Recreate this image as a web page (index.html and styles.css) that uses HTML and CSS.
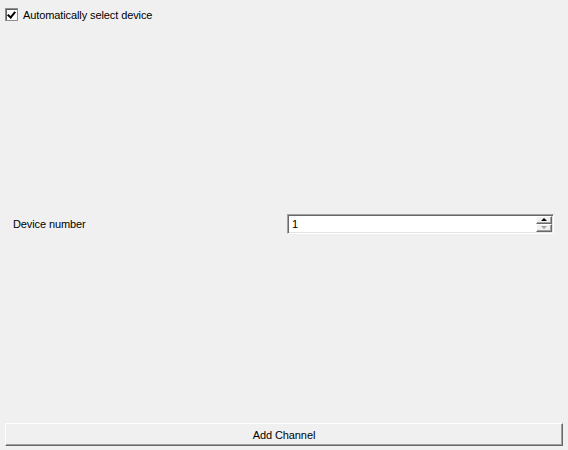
FILE: index.html
```html
<!DOCTYPE html>
<html>
<head>
    <title>Add Channel</title>
    <link rel="stylesheet" href="styles.css">
</head>
<body>
    <div class="window">
        <div class="auto-row">
            <span class="check-box checked"></span>
            <span class="check-label">Automatically select device</span>
        </div>

        <div class="device-area">
            <div class="device-row">
                <span class="device-label">Device number</span>
                <div class="spin-box">
                    <span class="spin-value">1</span>
                    <div class="spin-buttons">
                        <span class="spin-btn up"><i class="arrow-up"></i></span>
                        <span class="spin-btn down"><i class="arrow-down"></i></span>
                    </div>
                </div>
            </div>
        </div>

        <div class="button-row">
            <button class="add-button">Add Channel</button>
        </div>
    </div>
</body>
</html>
```

FILE: styles.css
```css
body {
    margin: 0;
    background-color: #f0f0f0;
    font-family: "Liberation Sans", Arial, sans-serif;
    font-size: 11px;
    letter-spacing: -0.1px;
    color: #000000;
}

.window {
    height: 450px;
    display: flex;
    flex-direction: column;
}

.auto-row {
    display: flex;
    align-items: center;
    padding: 8px 5px 0 5px;
    height: 13px;
}

.check-box {
    width: 11px;
    height: 11px;
    border: 1px solid #8e8f8f;
    box-shadow: inset 1px 1px #5d5d5d;
    background-color: #ffffff;
    position: relative;
    box-sizing: content-box;
}

.check-box.checked::after {
    content: "";
    position: absolute;
    left: 3px;
    top: 1px;
    width: 3px;
    height: 6px;
    border: solid #000000;
    border-width: 0 2px 2px 0;
    transform: rotate(40deg);
}

.check-label {
    margin-left: 5px;
}

.device-area {
    flex: 1;
    display: flex;
    align-items: center;
}

.device-row {
    flex: 1;
    display: grid;
    grid-template-columns: 1fr 267px;
    align-items: center;
    padding: 3px 14px 0 13px;
}

.spin-box {
    height: 20px;
    box-sizing: border-box;
    border: 1px solid;
    border-color: #a0a0a0 #ffffff #ffffff #a0a0a0;
    box-shadow: inset 1px 1px #696969, inset -1px -1px #e3e3e3;
    background-color: #ffffff;
    display: flex;
    align-items: center;
    padding: 1px 1px 1px 4px;
}

.spin-value {
    flex: 1;
}

.spin-buttons {
    display: flex;
    flex-direction: column;
    width: 16px;
    height: 16px;
}

.spin-btn {
    flex: 1;
    box-sizing: border-box;
    background-color: #f0f0f0;
    border: 1px solid;
    border-color: #ffffff #696969 #696969 #ffffff;
    box-shadow: inset -1px -1px #a0a0a0;
    display: flex;
    align-items: center;
    justify-content: center;
}

.arrow-up {
    width: 0;
    height: 0;
    border-left: 3px solid transparent;
    border-right: 3px solid transparent;
    border-bottom: 3px solid #000000;
    margin-right: 1px;
}

.arrow-down {
    width: 0;
    height: 0;
    border-left: 3px solid transparent;
    border-right: 3px solid transparent;
    border-top: 3px solid #a0a0a0;
    margin-right: 1px;
}

.button-row {
    padding: 0 5px 4px 5px;
}

.add-button {
    display: block;
    width: 100%;
    height: 23px;
    margin: 0;
    background-color: #f0f0f0;
    border: 1px solid;
    border-color: #ffffff #696969 #696969 #ffffff;
    box-shadow: inset -1px -1px #a0a0a0;
    font-family: "Liberation Sans", Arial, sans-serif;
    font-size: 11px;
    letter-spacing: -0.1px;
    color: #000000;
    padding: 0;
}
```
